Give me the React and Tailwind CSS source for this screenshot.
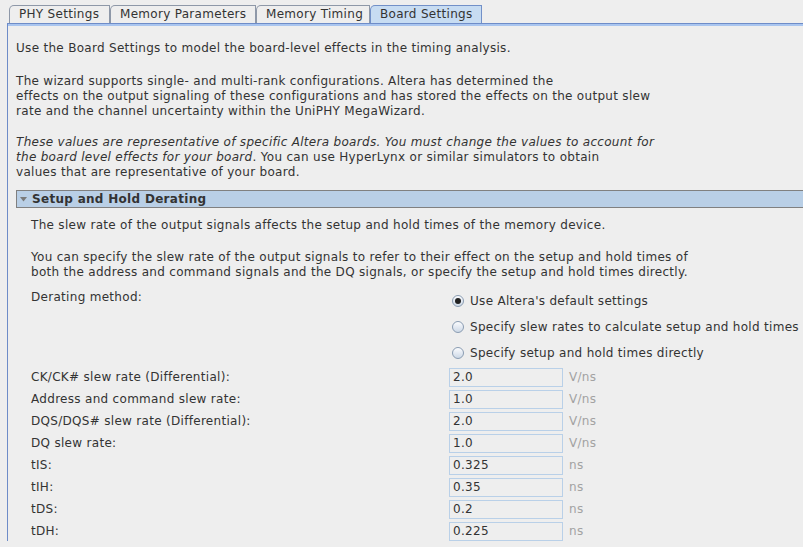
import React from 'react';

const font = { fontFamily: '"DejaVu Sans", sans-serif' };

function Tab({ label, width, active }) {
  return (
    <div
      className={`h-[18px] rounded-tl-[5px] border border-b-0 pl-[9px] text-[12px] leading-[17px] whitespace-nowrap ${width} ${
        active ? 'border-[#7290c8] bg-[#c7dcf2]' : 'border-[#8e98a8] bg-[#eeeeee]'
      }`}
    >
      {label}
    </div>
  );
}

function Radio({ checked, children }) {
  return (
    <div className="flex h-[26px] items-center">
      <span className="ml-[3px] mr-[6px] flex h-[12px] w-[12px] items-center justify-center rounded-full border border-[#8a9cb2] bg-gradient-to-b from-[#fbfcfe] to-[#cdd8e6]">
        {checked && <span className="h-[6px] w-[6px] rounded-full bg-[#222]" />}
      </span>
      <span>{children}</span>
    </div>
  );
}

function Field({ label, value, unit }) {
  return (
    <div className="flex h-[19px] items-center">
      <div className="w-[418px]">{label}</div>
      <div className="h-[19px] w-[114px] border border-[#b9d0e8] px-[3px] leading-[17px]">{value}</div>
      <div className="ml-[6px] text-[#a2a2a2]">{unit}</div>
    </div>
  );
}

const rows = [
  ['CK/CK# slew rate (Differential):', '2.0', 'V/ns'],
  ['Address and command slew rate:', '1.0', 'V/ns'],
  ['DQS/DQS# slew rate (Differential):', '2.0', 'V/ns'],
  ['DQ slew rate:', '1.0', 'V/ns'],
  ['tIS:', '0.325', 'ns'],
  ['tIH:', '0.35', 'ns'],
  ['tDS:', '0.2', 'ns'],
  ['tDH:', '0.225', 'ns'],
];

export default function App() {
  return (
    <div
      className="h-[547px] w-[803px] overflow-hidden bg-[#eeeeee] text-[12px] leading-[15px] tracking-[0.3px] text-[#333333]"
      style={font}
    >
      {/* tab strip */}
      <div className="flex pl-[9px] pt-[5px]">
        <Tab label="PHY Settings" width="w-[101px]" />
        <Tab label="Memory Parameters" width="w-[146px]" />
        <Tab label="Memory Timing" width="w-[114px]" />
        <Tab label="Board Settings" width="w-[112px]" active />
      </div>

      {/* panel */}
      <div className="ml-[7px] border-l border-t border-[#6e8cc8]">
        <div className="border-t-2 border-[#a9c5ef] pl-[8px] pt-[15px] whitespace-nowrap">
          <p>Use the Board Settings to model the board-level effects in the timing analysis.</p>
          <p className="mt-[18px]">
            The wizard supports single- and multi-rank configurations. Altera has determined the
            <br />
            effects on the output signaling of these configurations and has stored the effects on the output slew
            <br />
            rate and the channel uncertainty within the UniPHY MegaWizard.
          </p>
          <p className="mt-[16px]">
            <i>These values are representative of specific Altera boards. You must change the values to account for</i>
            <br />
            <i>the board level effects for your board</i>. You can use HyperLynx or similar simulators to obtain
            <br />
            values that are representative of your board.
          </p>

          {/* section */}
          <div className="mt-[10px] flex h-[18px] items-center border-y border-l border-[#808080] bg-[#b9cfe6]">
            <svg width="7" height="5" viewBox="0 0 7 5" className="ml-[3px] mr-[5px]">
              <path d="M0 0h7L3.5 4.5z" fill="#7a7a7a" />
            </svg>
            <span className="font-bold">Setup and Hold Derating</span>
          </div>

          <div className="pl-[15px]">
            <p className="mt-[10px]">The slew rate of the output signals affects the setup and hold times of the memory device.</p>
            <p className="mt-[17px]">
              You can specify the slew rate of the output signals to refer to their effect on the setup and hold times of
              <br />
              both the address and command signals and the DQ signals, or specify the setup and hold times directly.
            </p>

            <div className="mt-[8px] flex">
              <div className="w-[418px] pt-[2px]">Derating method:</div>
              <div>
                <Radio checked>Use Altera's default settings</Radio>
                <Radio>Specify slew rates to calculate setup and hold times</Radio>
                <Radio>Specify setup and hold times directly</Radio>
              </div>
            </div>

            <div className="mt-[2px] flex flex-col gap-[3px]">
              {rows.map(([l, v, u]) => (
                <Field key={l} label={l} value={v} unit={u} />
              ))}
            </div>
          </div>
        </div>
      </div>
    </div>
  );
}
